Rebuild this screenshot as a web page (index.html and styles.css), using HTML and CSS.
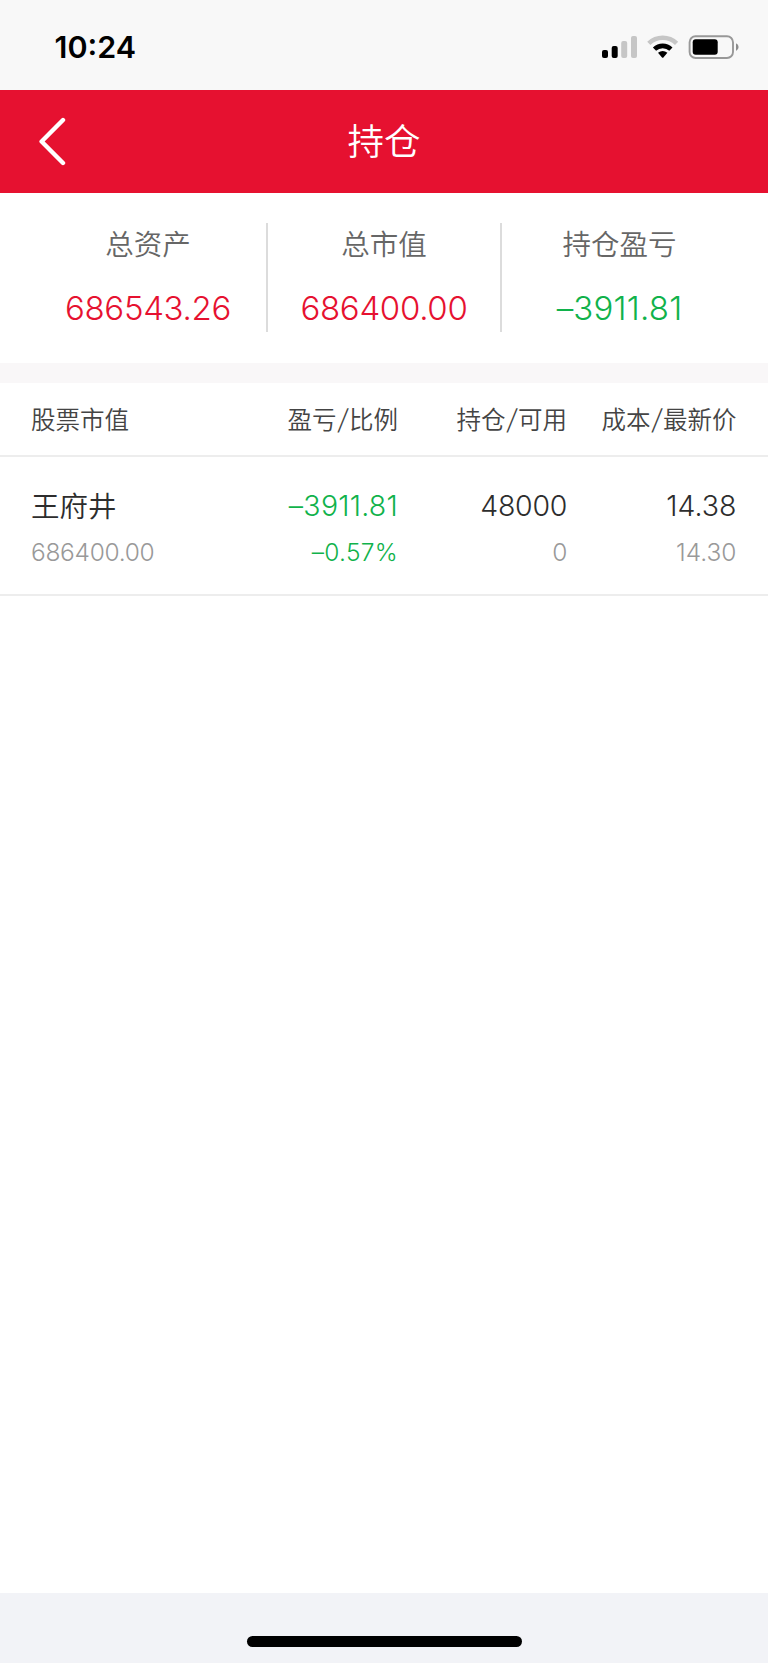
FILE: index.html
```html
<!DOCTYPE html>
<html lang="zh-CN">
<head>
<meta charset="utf-8">
<meta name="viewport" content="width=device-width">
<title>持仓</title>
<link rel="stylesheet" href="styles.css">
</head>
<body>
<div class="screen">
  <div class="status-bar">
    <span class="clock">10:24</span>
    <svg class="status-icons" width="140" height="26" viewBox="0 0 140 26" aria-hidden="true">
      <rect x="2" y="15" width="6" height="8" rx="2"/>
      <rect x="11.7" y="11" width="6" height="12" rx="2"/>
      <g fill="#c6c6c6">
        <rect x="21.2" y="6" width="6" height="17" rx="2"/>
        <rect x="31" y="1" width="6" height="22" rx="2"/>
      </g>
      <g fill="none">
        <path d="M48.8 8.3A20 20 0 0 1 76.6 8.3" stroke="#c6c6c6" stroke-width="4.6"/>
        <path d="M54.5 14.2A11.8 11.8 0 0 1 70.9 14.2" stroke="#000" stroke-width="4.6"/>
      </g>
      <path d="M58 17.7Q62.7 14.3 67.4 17.7L63.6 22.3Q62.7 23.3 61.8 22.3Z"/>
      <rect x="89.6" y="1.2" width="43.4" height="21.8" rx="6" fill="none" stroke="#989898" stroke-width="1.9"/>
      <rect x="92.7" y="4.2" width="25" height="15.6" rx="3"/>
      <path d="M136 8.2Q138.6 9.2 138.6 12.1T136 16Z" fill="#8c8c8c"/>
    </svg>
  </div>
  <header class="nav-bar">
    <svg class="back-icon" width="30" height="50" viewBox="0 0 30 50" aria-label="返回"><path d="M26 4L4.6 25.5L26 47" fill="none" stroke="#fff" stroke-width="4.4" stroke-linecap="round" stroke-linejoin="round"/></svg>
    <h1 class="title">持仓</h1>
  </header>
  <section class="summary">
    <div class="metric"><span class="metric-label">总资产</span><span class="metric-value up">686543.26</span></div>
    <div class="metric"><span class="metric-label">总市值</span><span class="metric-value up">686400.00</span></div>
    <div class="metric"><span class="metric-label">持仓盈亏</span><span class="metric-value down">–3911.81</span></div>
  </section>
  <section class="holdings">
    <div class="row head">
      <span>股票市值</span><span>盈亏<i class="slash">/</i>比例</span><span>持仓<i class="slash">/</i>可用</span><span>成本<i class="slash">/</i>最新价</span>
    </div>
    <div class="row item">
      <div class="cell"><span class="main name">王府井</span><span class="sub">686400.00</span></div>
      <div class="cell down"><span class="main">–3911.81</span><span class="sub">–0.57%</span></div>
      <div class="cell"><span class="main">48000</span><span class="sub">0</span></div>
      <div class="cell price"><span class="main">14.38</span><span class="sub">14.30</span></div>
    </div>
  </section>
  <footer class="home-area"><div class="home-indicator"></div></footer>
</div>
</body>
</html>
```
FILE: styles.css
```css
* { box-sizing: border-box; }

body {
  margin: 0;
  background: #fff;
  font-family: Inter, "Noto Sans CJK SC", sans-serif;
  font-weight: 300;
}

.screen {
  display: flex;
  flex-direction: column;
  width: 768px;
  height: 1663px;
}

.status-bar {
  display: flex;
  justify-content: space-between;
  align-items: flex-start;
  height: 90px;
  padding: 35px 28px 0 54.5px;
  background: #f8f8f8;
}

.clock {
  font-size: 30.5px;
  font-weight: 600;
  line-height: 23px;
}

.nav-bar {
  display: grid;
  grid-template-columns: 110px 1fr 110px;
  align-items: center;
  height: 102.5px;
  background: #e61130;
  color: #fff;
}

.back-icon { margin-left: 37px; }

.title,
.metric-label,
.head,
.name {
  font-family: "Noto Sans CJK SC", sans-serif;
  font-weight: 350;
}

.title {
  margin: 0;
  padding-bottom: 2px;
  font-size: 36.5px;
  line-height: 50px;
  text-align: center;
}

.summary {
  display: grid;
  grid-template-columns: 236px 234px 237px;
  padding: 30.5px 0 31px 30px;
  height: 190.5px;
  border-bottom: 20px solid #f9f7f8;
}

.metric {
  display: flex;
  flex-direction: column;
  align-items: center;
}

.metric + .metric { border-left: 2px solid #dcdcdc; }

.metric-label {
  color: #666;
  font-size: 28.5px;
  line-height: 40px;
}

.metric-value {
  margin-top: 25px;
  font-size: 33px;
  letter-spacing: -0.3px;
  line-height: 40px;
}

.up { color: #e61130; }
.down { color: #10b24b; }

.metric-value.down { letter-spacing: 0.2px; }

.holdings { flex: 1; }

.row {
  display: grid;
  grid-template-columns: 211px 156px 169px 169.5px;
  padding: 0 31px;
  border-bottom: 2px solid #ededed;
  text-align: right;
}

.row > :first-child { text-align: left; }

.head {
  height: 74px;
  color: #444;
  font-size: 24.5px;
  line-height: 71px;
}

.slash {
  display: inline-block;
  width: 12.5px;
  font-size: 25px;
  font-style: normal;
  line-height: 1;
  text-align: center;
  transform: translateY(-1px) skewX(-5deg);
}

.item {
  height: 139px;
  padding-top: 29px;
  color: #2d2d2d;
}

.cell {
  display: flex;
  flex-direction: column;
}

.main {
  font-size: 28.5px;
  letter-spacing: -0.3px;
  line-height: 40px;
}

.down .main { letter-spacing: 0.25px; }

.sub {
  margin-top: 7px;
  color: #999;
  font-size: 24.5px;
  letter-spacing: -0.3px;
  line-height: 38px;
}

.item .down .sub {
  color: #10b24b;
  letter-spacing: 0.3px;
}

.price .main,
.price .sub { letter-spacing: 0; }

.name {
  letter-spacing: 0;
  line-height: 37px;
  padding-bottom: 3px;
}

.home-area {
  display: flex;
  justify-content: center;
  height: 70px;
  padding-top: 43px;
  background: #f2f3f7;
}

.home-indicator {
  width: 275px;
  height: 10.5px;
  border-radius: 6px;
  background: #000;
}
```
